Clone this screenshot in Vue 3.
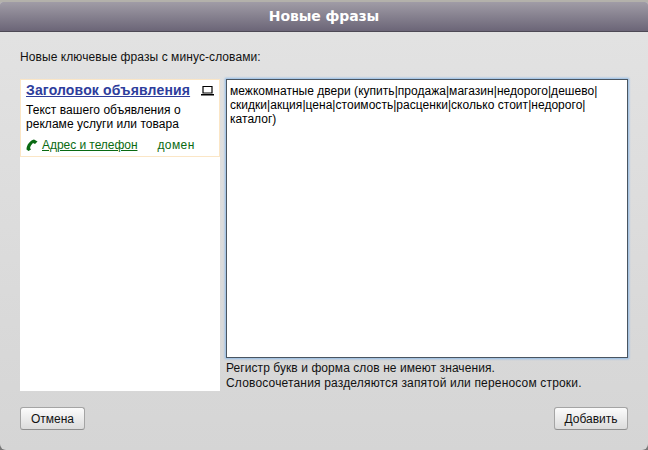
<script setup>
const phrase = 'межкомнатные двери (купить|продажа|магазин|недорого|дешево|\nскидки|акция|цена|стоимость|расценки|сколько стоит|недорого|\nкаталог)'
</script>

<template>
  <div class="page">
    <div class="dialog">
      <header class="head">Новые фразы</header>
      <main class="body">
        <p class="label">Новые ключевые фразы с минус-словами:</p>
        <div class="columns">
          <aside class="preview">
            <div class="ad">
              <div class="title-row">
                <a class="title">Заголовок объявления</a>
                <svg class="laptop" width="15" height="11" viewBox="0 0 15 11">
                  <path d="M3 1.500h9v6.500H3z" fill="none" stroke="#000" stroke-width="1.2" />
                  <path d="M1 9h13v1.500H1z" fill="#000" />
                </svg>
              </div>
              <p class="text">Текст вашего объявления о<br />рекламе услуги или товара</p>
              <div class="contacts">
                <svg class="phone" width="12" height="12" viewBox="0 0 12 12">
                  <path d="M.5 10.500C.5 6 4 1.500 8 .5L11.500 2.500 9 5 7 4C5.500 5.500 4.500 7 4 9L5 10.500 2.500 12z" fill="#0a6a12" />
                </svg>
                <a class="addr">Адрес и телефон</a>
                <span class="domain">домен</span>
              </div>
            </div>
          </aside>
          <section class="editor">
            <div class="input">{{ phrase }}</div>
            <p class="hint"><span class="hint-first">Регистр букв и форма слов не имеют значения.</span><br /><span class="hint-second">Словосочетания разделяются запятой или переносом строки.</span></p>
          </section>
        </div>
        <footer class="actions">
          <button class="btn btn-cancel" type="button">Отмена</button>
          <button class="btn" type="button">Добавить</button>
        </footer>
      </main>
    </div>
  </div>
</template>

<style scoped>
.page {
  width: 648px;
  height: 450px;
  background: linear-gradient(#b3b1ab 0, #b3b1ab 10px, #777 10px);
  overflow: hidden;
  font-family: "Liberation Sans", Arial, sans-serif;
  font-size: 12px;
  color: #111;
}
.dialog {
  height: 448px;
  margin-top: 2px;
  border-radius: 3px 3px 6px 6px;
  overflow: hidden;
  display: flex;
  flex-direction: column;
  background: linear-gradient(#e3e3e3, #d5d5d5);
}
.head {
  height: 30px;
  flex: none;
  box-sizing: border-box;
  border-bottom: 1px solid #4d4955;
  background: linear-gradient(#a09ca6, #6b6577);
  color: #fff;
  font: bold 14px/29px "DejaVu Sans", Verdana, sans-serif;
  letter-spacing: -0.1px;
  text-align: center;
}
.body {
  flex: 1;
  display: flex;
  flex-direction: column;
  padding: 0 20px;
}
.label {
  margin: 18px 0 0;
  line-height: 14px;
  letter-spacing: 0.08px;
}
.columns {
  display: flex;
  gap: 6px;
  margin-top: 15px;
  height: 312px;
}
.preview {
  width: 200px;
  flex: none;
  background: #fff;
}
.ad {
  height: 78px;
  box-sizing: border-box;
  border: 1px solid #fbe6c6;
  padding: 0 0 0 5px;
}
.title-row {
  display: flex;
  align-items: center;
  justify-content: space-between;
  padding-right: 4px;
  height: 20px;
}
.title {
  font-size: 14px;
  font-weight: bold;
  line-height: 16px;
  letter-spacing: 0.15px;
  color: #2e3d9c;
  text-decoration: underline;
}
.laptop {
  display: block;
}
.text {
  margin: 3px 0 0;
  line-height: 14px;
  letter-spacing: 0.04px;
  color: #000;
}
.contacts {
  display: flex;
  align-items: center;
  margin-top: 7px;
  height: 14px;
  color: #0a6a12;
}
.phone {
  margin-right: 4px;
}
.addr {
  letter-spacing: -0.05px;
  text-decoration: underline;
}
.domain {
  margin-left: 20px;
  letter-spacing: 0.4px;
}
.editor {
  flex: 1;
  display: flex;
  flex-direction: column;
}
.input {
  height: 280px;
  box-sizing: border-box;
  border: 1px solid #4a5560;
  box-shadow: 0 0 2px 1px #8fbbe8;
  background: #fff;
  padding: 4px 3px;
  line-height: 14px;
  letter-spacing: 0.03px;
  color: #000;
  white-space: pre;
}
.hint {
  margin: 3px 0 0;
  line-height: 15px;
}
.hint-first {
  letter-spacing: 0.07px;
}
.hint-second {
  letter-spacing: 0.17px;
}
.actions {
  display: flex;
  justify-content: space-between;
  margin-top: 16px;
}
.btn {
  height: 23px;
  padding: 0 9.500px;
  border: 1px solid #a4a4a4;
  border-bottom-color: #8f8f8f;
  border-radius: 3px;
  background: linear-gradient(#fbfbfb, #dcdcdc);
  font: 12px "Liberation Sans", Arial, sans-serif;
  color: #111;
}
.btn-cancel {
  min-width: 65px;
}
</style>
